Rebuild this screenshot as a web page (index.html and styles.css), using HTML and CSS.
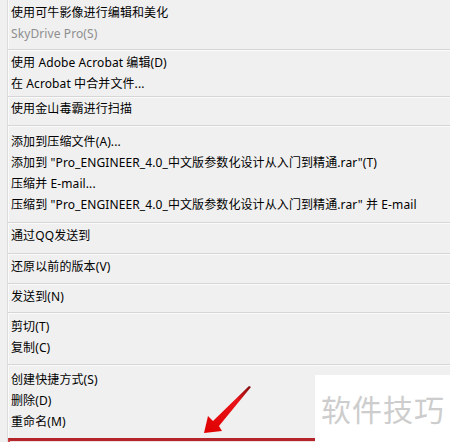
FILE: index.html
```html
<!DOCTYPE html>
<html lang="zh-CN">
<head>
<meta charset="utf-8">
<title>右键菜单</title>
<link rel="stylesheet" href="styles.css">
</head>
<body>
<div class="screen">
  <div class="menu">
    <div class="item">使用可牛影像进行编辑和美化</div>
    <div class="item disabled">SkyDrive Pro(S)</div>
    <div class="sep sep-a"></div>
    <div class="item">使用 Adobe Acrobat 编辑(D)</div>
    <div class="item">在 Acrobat 中合并文件...</div>
    <div class="sep sep-b"></div>
    <div class="item">使用金山毒霸进行扫描</div>
    <div class="sep sep-c"></div>
    <div class="item">添加到压缩文件(A)...</div>
    <div class="item">添加到 "Pro_ENGINEER_4.0_中文版参数化设计从入门到精通.rar"(T)</div>
    <div class="item">压缩并 E-mail...</div>
    <div class="item">压缩到 "Pro_ENGINEER_4.0_中文版参数化设计从入门到精通.rar" 并 E-mail</div>
    <div class="sep sep-d"></div>
    <div class="item">通过QQ发送到</div>
    <div class="sep sep-d"></div>
    <div class="item">还原以前的版本(V)</div>
    <div class="sep sep-e"></div>
    <div class="item">发送到(N)</div>
    <div class="sep sep-f"></div>
    <div class="item">剪切(T)</div>
    <div class="item">复制(C)</div>
    <div class="sep sep-g"></div>
    <div class="item">创建快捷方式(S)</div>
    <div class="item">删除(D)</div>
    <div class="item">重命名(M)</div>
    <div class="highlight"></div>
  </div>
  <svg class="arrow" width="60" height="60" viewBox="0 0 60 60">
    <defs>
      <linearGradient id="ag" x1="0" y1="1" x2="1" y2="0">
        <stop offset="0" stop-color="#e00000"/>
        <stop offset="0.7" stop-color="#e8141a"/>
        <stop offset="1" stop-color="#7a1010"/>
      </linearGradient>
    </defs>
    <path d="M4 52 L8 35 L13 40 L49 5 L51 6 L19 45 L22 50 Z" fill="url(#ag)"/>
  </svg>
  <div class="watermark">软件技巧</div>
</div>
</body>
</html>
```

FILE: styles.css
```css
html, body {
  margin: 0;
  padding: 0;
  background: #f0f0f0;
}

.screen {
  position: relative;
  width: 450px;
  height: 442px;
  overflow: hidden;
  background: #f0f0f0;
  font-family: "Noto Sans", "Noto Sans CJK SC", sans-serif;
  font-size: 12px;
  color: #000;
}

.menu {
  margin-left: 7px;
  height: 442px;
  padding-top: 2px;
  box-sizing: border-box;
  border-left: 1px solid #dcdcdc;
  box-shadow: inset 1px 0 0 #fbfbfb;
}

.item {
  height: 21px;
  line-height: 21px;
  padding-left: 3px;
  white-space: nowrap;
  letter-spacing: 0.1px;
}

.item.disabled {
  color: #8e8e8e;
}

.sep {
  box-sizing: border-box;
  display: flow-root;
}

.sep::before {
  content: "";
  display: block;
  height: 1px;
  background: #d6d6d6;
  border-bottom: 1px solid #fbfbfb;
}

.sep-a { height: 8px; padding-top: 5px; }
.sep-b { height: 4px; padding-top: 2px; }
.sep-c { height: 12px; padding-top: 6px; }
.sep-d { height: 10px; padding-top: 7px; }
.sep-e { height: 9px; padding-top: 6px; }
.sep-f { height: 9px; padding-top: 5px; }
.sep-g { height: 11px; padding-top: 6px; }

.highlight {
  margin-top: 6px;
  height: 20px;
  border-top: 3px solid #b3252b;
  border-left: 2px solid #c44;
  background: #f1dede;
}

.arrow {
  position: absolute;
  left: 200px;
  top: 381px;
}

.watermark {
  position: absolute;
  left: 315px;
  top: 375px;
  width: 135px;
  height: 67px;
  background: #fff;
  color: #cdcdcd;
  font-family: "Noto Sans CJK SC", sans-serif;
  font-size: 30px;
  line-height: 67px;
  padding-left: 6px;
  box-sizing: border-box;
  letter-spacing: 1px;
  white-space: nowrap;
}
```
